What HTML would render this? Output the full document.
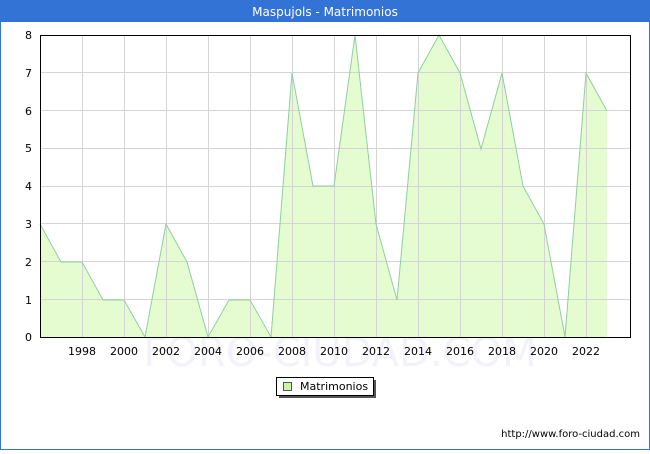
<!DOCTYPE html>
<html><head><meta charset="utf-8"><style>
html,body{margin:0;padding:0;background:#fff;}
body{width:650px;height:450px;overflow:hidden;font-family:"DejaVu Sans","Liberation Sans",sans-serif;}
</style></head><body>
<svg width="650" height="450" xmlns="http://www.w3.org/2000/svg" font-family="DejaVu Sans, Liberation Sans, sans-serif">
<rect x="0.5" y="0.5" width="649" height="449" fill="#fff" stroke="#3473d6"/>
<rect x="0" y="0" width="650" height="22" fill="#3473d6"/>
<text x="325" y="16" fill="#fff" font-size="12" text-anchor="middle">Maspujols - Matrimonios</text>
<text x="340" y="366" fill="#f2f2f8" font-size="40" text-anchor="middle">FORO-CIUDAD.COM</text>
<polygon fill="#e4fcd0" points="40,337 40,224 61,262 82,262 103,300 124,300 145,337 166,224 187,262 208,337 229,300 250,300 271,337 292,73 313,186 334,186 355,35 376,224 397,300 418,73 439,35 460,73 481,149 502,73 523,186 544,224 565,337 586,73 607,111 607,337"/>
<g stroke="#d4d4d4" stroke-width="1">
<line x1="40" y1="299.5" x2="630" y2="299.5"/><line x1="40" y1="261.5" x2="630" y2="261.5"/><line x1="40" y1="223.5" x2="630" y2="223.5"/><line x1="40" y1="186.5" x2="630" y2="186.5"/><line x1="40" y1="148.5" x2="630" y2="148.5"/><line x1="40" y1="110.5" x2="630" y2="110.5"/><line x1="40" y1="72.5" x2="630" y2="72.5"/>
<line x1="82.5" y1="35" x2="82.5" y2="337"/><line x1="124.5" y1="35" x2="124.5" y2="337"/><line x1="166.5" y1="35" x2="166.5" y2="337"/><line x1="208.5" y1="35" x2="208.5" y2="337"/><line x1="250.5" y1="35" x2="250.5" y2="337"/><line x1="292.5" y1="35" x2="292.5" y2="337"/><line x1="334.5" y1="35" x2="334.5" y2="337"/><line x1="376.5" y1="35" x2="376.5" y2="337"/><line x1="418.5" y1="35" x2="418.5" y2="337"/><line x1="460.5" y1="35" x2="460.5" y2="337"/><line x1="502.5" y1="35" x2="502.5" y2="337"/><line x1="544.5" y1="35" x2="544.5" y2="337"/><line x1="586.5" y1="35" x2="586.5" y2="337"/>
</g>
<polyline fill="none" stroke="#8fcf9f" stroke-width="1" points="40,224 61,262 82,262 103,300 124,300 145,337 166,224 187,262 208,337 229,300 250,300 271,337 292,73 313,186 334,186 355,35 376,224 397,300 418,73 439,35 460,73 481,149 502,73 523,186 544,224 565,337 586,73 607,111"/>
<rect x="40.5" y="35.5" width="590" height="302" fill="none" stroke="#000"/>
<g font-size="11" fill="#000" text-anchor="end">
<text x="32" y="341">0</text><text x="32" y="304">1</text><text x="32" y="266">2</text><text x="32" y="228">3</text><text x="32" y="190">4</text><text x="32" y="152">5</text><text x="32" y="115">6</text><text x="32" y="77">7</text><text x="32" y="39">8</text>
</g>
<g font-size="11" fill="#000" text-anchor="middle">
<text x="82" y="355">1998</text><text x="124" y="355">2000</text><text x="166" y="355">2002</text><text x="208" y="355">2004</text><text x="250" y="355">2006</text><text x="292" y="355">2008</text><text x="334" y="355">2010</text><text x="376" y="355">2012</text><text x="418" y="355">2014</text><text x="460" y="355">2016</text><text x="502" y="355">2018</text><text x="544" y="355">2020</text><text x="586" y="355">2022</text>
</g>
<rect x="279" y="380" width="97" height="18" fill="#555"/>
<rect x="276.5" y="377.5" width="97" height="18" fill="#fff" stroke="#000"/>
<rect x="283.5" y="382.5" width="8" height="8" fill="#ccf5a8" stroke="#555"/>
<text x="300" y="390" font-size="11" fill="#000">Matrimonios</text>
<text x="640" y="437" font-size="10" fill="#000" text-anchor="end">http://www.foro-ciudad.com</text>
</svg>
</body></html>
